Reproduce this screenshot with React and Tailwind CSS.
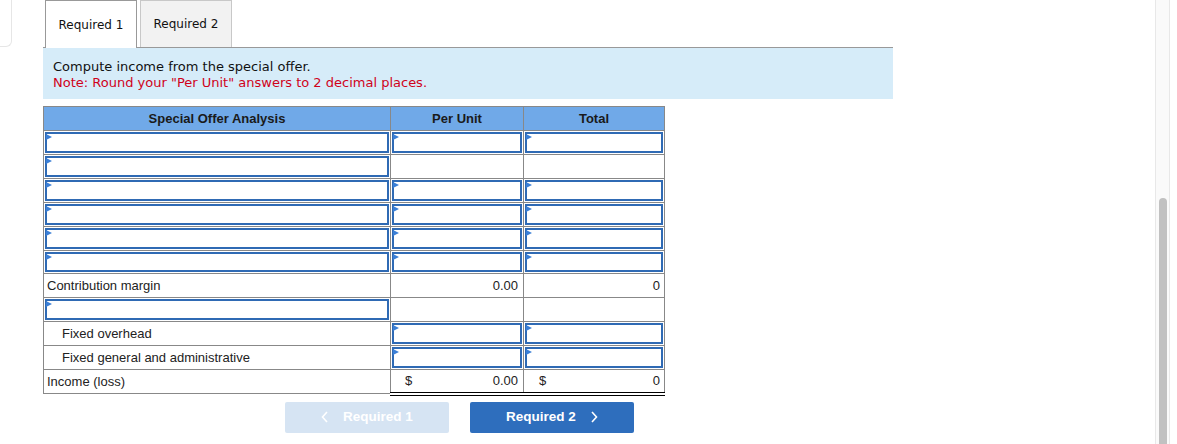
import React from 'react';

const font = { sans: 'font-["Liberation_Sans",Arial,sans-serif]', verdana: 'font-["DejaVu_Sans",Verdana,sans-serif]' };

function Input({ short }) {
  return (
    <div className={`relative ${short ? 'h-[20px]' : 'h-[21px]'} border-2 border-[#2f6ab4] bg-white`}>
      <span className="absolute left-[-1px] top-0 w-0 h-0 border-l-[6px] border-l-[#3b7fd6] border-y-[3px] border-y-transparent" />
    </div>
  );
}

const td = 'border border-[#888] p-px align-middle';

export default function App() {
  const rows = [
    { a: true, b: true, c: true },
    { a: true, b: false, c: false },
    { a: true, b: true, c: true },
    { a: true, b: true, c: true },
    { a: true, b: true, c: true },
    { a: true, b: true, c: true },
  ];

  return (
    <div className={`flex w-[1177px] h-[444px] overflow-hidden bg-white ${font.sans}`}>
      {/* previous panel edge */}
      <div className="w-[12px] h-[47px] shrink-0 border-r border-b border-[#e6e6e6] rounded-br-[6px]" />

      <div className="flex-1 pl-[31px]">
        {/* Tabs */}
        <div className="flex gap-[3px] ml-[2px] relative z-10">
          <div className={`w-[92px] h-[48px] -mb-px flex items-center justify-center bg-white border border-b-0 border-[#999] text-[12px] text-[#111] ${font.verdana}`}>
            Required 1
          </div>
          <div className={`w-[92px] h-[47px] flex items-center justify-center bg-[#f2f2f2] border border-b-0 border-[#c8c8c8] text-[12px] text-[#111] ${font.verdana}`}>
            Required 2
          </div>
        </div>

        {/* Instructions */}
        <div className={`w-[850px] border-t border-[#999] bg-[#d6ecf9] pl-[10px] pt-[11px] pb-[8px] text-[13px] leading-[16px] ${font.verdana}`}>
          <p className="text-[#111]">Compute income from the special offer.</p>
          <p className="text-[#d0021b]">Note: Round your "Per Unit" answers to 2 decimal places.</p>
        </div>

        {/* Table */}
        <table className="mt-[7px] border-collapse text-[13px] text-[#222] table-fixed w-[621px]">
          <colgroup>
            <col className="w-[347px]" />
            <col className="w-[133px]" />
            <col className="w-[141px]" />
          </colgroup>
          <thead>
            <tr className="bg-[#70a9e8]">
              <th className="border border-[#888] h-[24px] font-bold text-[#1a1a1a]">Special Offer Analysis</th>
              <th className="border border-[#888] h-[24px] font-bold text-[#1a1a1a]">Per Unit</th>
              <th className="border border-[#888] h-[24px] font-bold text-[#1a1a1a]">Total</th>
            </tr>
          </thead>
          <tbody>
            {rows.map((r, i) => {
              const short = i === 5;
              return (
                <tr key={i}>
                  <td className={td}>{r.a ? <Input short={short} /> : null}</td>
                  <td className={td}>{r.b ? <Input short={short} /> : <div className="h-[21px]" />}</td>
                  <td className={td}>{r.c ? <Input short={short} /> : <div className="h-[21px]" />}</td>
                </tr>
              );
            })}
            <tr>
              <td className={`${td} pl-[3px] h-[24px]`}>Contribution margin</td>
              <td className={`${td} border-t-black text-right pr-[5px]`}>0.00</td>
              <td className={`${td} border-t-black text-right pr-[4px]`}>0</td>
            </tr>
            <tr>
              <td className={td}><Input /></td>
              <td className={td} />
              <td className={td} />
            </tr>
            <tr>
              <td className={`${td} pl-[18px]`}>Fixed overhead</td>
              <td className={td}><Input /></td>
              <td className={td}><Input /></td>
            </tr>
            <tr>
              <td className={`${td} pl-[18px]`}>Fixed general and administrative</td>
              <td className={td}><Input /></td>
              <td className={td}><Input /></td>
            </tr>
            <tr>
              <td className={`${td} pl-[3px] h-[23px]`}>Income (loss)</td>
              <td className={`${td} border-b-[4px] border-b-black [border-bottom-style:double] pr-[5px]`}>
                <div className="flex justify-between pl-[13px]"><span>$</span><span>0.00</span></div>
              </td>
              <td className={`${td} border-b-[4px] border-b-black [border-bottom-style:double] pr-[4px]`}>
                <div className="flex justify-between pl-[14px]"><span>$</span><span>0</span></div>
              </td>
            </tr>
          </tbody>
        </table>

        {/* Navigation */}
        <div className="flex gap-[21px] ml-[242px] mt-[6px]">
          <button className="w-[164px] h-[31px] rounded-[2px] bg-[#d6e4f3] text-white font-bold text-[13.5px] flex items-center justify-center gap-[14px]">
            <svg width="8" height="12" viewBox="0 0 8 12" fill="none" stroke="currentColor" strokeWidth="1.6"><path d="M6 1 1.5 6 6 11" /></svg>
            Required 1
          </button>
          <button className="w-[164px] h-[31px] rounded-[2px] bg-[#2e6ebd] text-white font-bold text-[13.5px] flex items-center justify-center gap-[14px]">
            Required 2
            <svg width="8" height="12" viewBox="0 0 8 12" fill="none" stroke="currentColor" strokeWidth="1.6"><path d="M2 1 6.5 6 2 11" /></svg>
          </button>
        </div>
      </div>

      {/* Scrollbar */}
      <div className="w-[15px] h-full mr-[7px] shrink-0 bg-[#fafafa] border-x border-[#e8e8e8] flex flex-col pt-[198px] items-center">
        <div className="w-[8px] flex-1 rounded-t-full bg-[#c1c1c1]" />
      </div>
    </div>
  );
}
